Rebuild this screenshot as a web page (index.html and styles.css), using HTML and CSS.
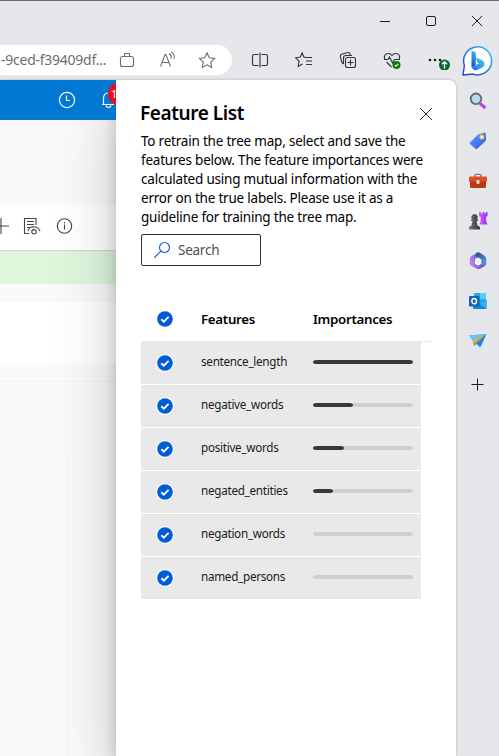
FILE: index.html
```html
<!DOCTYPE html>
<html lang="en">
<head>
<meta charset="utf-8">
<title>Feature List</title>
<link rel="stylesheet" href="styles.css">
</head>
<body>
<svg width="0" height="0" class="defs" aria-hidden="true">
  <defs>
    <linearGradient id="bingRing" x1="0" y1="1" x2="1" y2="0"><stop offset="0" stop-color="#2145c8"/><stop offset=".5" stop-color="#2b7be6"/><stop offset="1" stop-color="#35c4f2"/></linearGradient>
    <linearGradient id="bingB" x1="0" y1="0" x2="0" y2="1"><stop offset="0" stop-color="#37b8f5"/><stop offset="1" stop-color="#1b48d4"/></linearGradient>
    <linearGradient id="bingC" x1="0" y1="1" x2="1" y2="0"><stop offset="0" stop-color="#1c62e6"/><stop offset="1" stop-color="#3fdcf0"/></linearGradient>
    <linearGradient id="tag" x1="0" y1="0" x2="1" y2="1"><stop offset="0" stop-color="#5ea4ff"/><stop offset="1" stop-color="#2d55e0"/></linearGradient>
    <linearGradient id="pawn" x1="0" y1="0" x2="1" y2="0"><stop offset="0" stop-color="#777"/><stop offset="1" stop-color="#333"/></linearGradient>
    <linearGradient id="rook" x1="0" y1="0" x2="1" y2="0"><stop offset="0" stop-color="#cf63ff"/><stop offset="1" stop-color="#9a2af0"/></linearGradient>
    <linearGradient id="officeL" x1="1" y1="0" x2="0" y2="1"><stop offset="0" stop-color="#6f5bc8"/><stop offset="1" stop-color="#c08cf0"/></linearGradient>
    <linearGradient id="officeR" x1="0" y1="0" x2="1" y2="1"><stop offset="0" stop-color="#24457f"/><stop offset="1" stop-color="#5aa5f2"/></linearGradient>
    <linearGradient id="officeB" x1="0" y1="0" x2="1" y2="0"><stop offset="0" stop-color="#b57ae8"/><stop offset="1" stop-color="#6a3fb0"/></linearGradient>
    <symbol id="check" viewBox="0 0 18 18"><circle cx="9" cy="9" r="9" fill="#fff"/><circle cx="9" cy="9" r="7.8" fill="#015cda"/><path d="M5.3 9.2l2.5 2.4 4.8-4.8" fill="none" stroke="#fff" stroke-width="1.9"/></symbol>
  </defs>
</svg>
<div class="browser">
  <div class="titlebar">
    <svg class="win" viewBox="0 0 12 12"><path d="M1 6.5h10"/></svg>
    <svg class="win" viewBox="0 0 12 12"><rect x="1.5" y="1.5" width="9" height="9" rx="1.5"/></svg>
    <svg class="win" viewBox="0 0 12 12"><path d="M1 1l10 10M11 1L1 11"/></svg>
  </div>
  <div class="toolbar">
    <div class="address">
      <span class="url">-9ced-f39409df...</span>
      <svg class="ico gray" viewBox="0 0 20 20"><rect x="3.5" y="6.5" width="13" height="10" rx="2"/><path d="M7.5 6.5v-3h5v3"/></svg>
      <svg class="ico gray" viewBox="0 0 20 20"><path d="M3.5 16.5l4.600-12h.8l4.600 12M5.200 12.500h6.600M12 3.500q2.600 1.800 2.300 5M14.200 1.800q3.600 2.400 3.100 7"/></svg>
      <svg class="ico gray" viewBox="0 0 20 20"><path d="M10 2.800l2.300 4.900 5.300.7-3.900 3.700 1 5.300L10 14.800l-4.700 2.600 1-5.300-3.900-3.700 5.300-.7z"/></svg>
    </div>
    <div class="actions">
      <svg class="ico" viewBox="0 0 20 20"><path d="M8.500 4.500H4a1.500 1.500 0 0 0-1.500 1.500v8A1.500 1.500 0 0 0 4 15.500h4.500M11.500 4.500H16a1.500 1.500 0 0 1 1.500 1.500v8a1.500 1.500 0 0 1-1.500 1.500h-4.500M10 2.500v15"/></svg>
      <svg class="ico" viewBox="0 0 20 20"><path d="M11 7.500h7M12 11h6M12 14.500h6M11.500 7.500L9.900 7 8.100 2.800 6.300 7l-4.600.8 3.400 3.500-.9 5.200 4.300-2.500"/></svg>
      <svg class="ico" viewBox="0 0 20 20"><rect x="7.500" y="7.500" width="10" height="10" rx="2"/><path d="M12.500 9.500v6M9.500 12.500h6M5.500 14l-1.600-1.500L2.300 6.500Q2 4.800 3.500 4.200L10 2.500q1.500-.2 2 1.500l.3 1.500M5.500 14V8q0-2.500 2.500-2.500h6"/></svg>
      <svg class="ico" viewBox="0 0 20 20"><path d="M2.800 9.500C1.200 5.500 4 3.300 6.500 3.500c1.700.1 2.700 1 3.500 2 .8-1 1.800-1.900 3.500-2 2.500-.2 5.300 2 3.700 6M4.500 12l5 5M2 9.500h4l1.500-2.500 3 6 2-3.500h5.500"/><circle cx="14.500" cy="15" r="4" fill="#107c10" stroke="none"/><path d="M12.800 15.200l1.200 1.100 2.300-2.400" stroke="#fff"/></svg>
      <svg class="more" viewBox="0 0 24 20"><g fill="#1b1b1b"><circle cx="4" cy="10" r="1.300"/><circle cx="9" cy="10" r="1.300"/><circle cx="14" cy="10" r="1.300"/></g><circle cx="18.500" cy="15" r="5.500" fill="#0b6a2b"/><path d="M18.500 18.500v-6.500M16 14.200l2.500-2.500 2.500 2.500" fill="none" stroke="#fff" stroke-width="1.400"/></svg>
    </div>
    <svg class="bing" viewBox="0 0 32 32"><path d="M2 30l1.400-9.500A14 14 0 1 1 12 29.100z" fill="#fff" stroke="url(#bingRing)" stroke-width="1.500" stroke-linejoin="round"/><path d="M10.500 5.500l4.300 2V20l-4.300 2.500z" fill="url(#bingB)"/><path d="M10.500 20.500q2 1.200 4.300-.2l3.200-1.900-1.700-.9-1.500-5 6 2.500q2.800 1.200 2.700 4.200-.1 2-1.800 3L16 25q-1.500.7-3 0-2.300-1.200-2.500-4.500z" fill="url(#bingC)"/></svg>
  </div>
  <div class="main">
    <div class="page">
      <div class="under">
        <div class="azure">
          <svg class="clock" viewBox="0 0 18 18"><circle cx="9" cy="9" r="7.600"/><path d="M8.500 4.500v5H12"/></svg>
          <svg class="bell" viewBox="0 0 18 18"><path d="M2 13.500h13M3.500 13.500V7.500q0-5.500 5-5.500t5 5.500v6M6 14.500q.5 2 2.500 2t2.500-2"/></svg>
          <span class="badge">1</span>
        </div>
        <div class="blank"></div>
        <div class="commands">
          <svg class="cmd plus" viewBox="0 0 18 18"><path d="M9 1v16M1 9h16"/></svg>
          <svg class="cmd" viewBox="0 0 18 18"><path d="M6 16.500H1.500V1.500h11.500v6.500M4 4.500h7M4 7.500h7M4 10.500h2.500M5 14q1-4 5.500-4.200 5 .2 6.500 4.200"/><circle cx="11" cy="14.800" r="2.200"/></svg>
          <svg class="cmd" viewBox="0 0 18 18"><circle cx="9.500" cy="9" r="7.200"/><path d="M9.500 7.500v5M9.500 5v1.400"/></svg>
        </div>
        <div class="notice"></div>
        <div class="gap"></div>
        <div class="card"></div>
        <div class="strip"></div>
        <div class="rest"><div class="rail"></div></div>
      </div>
      <section class="panel">
        <header class="head">
          <h1>Feature List</h1>
          <svg class="close" viewBox="0 0 14 14"><path d="M1 1l12 12M13 1L1 13"/></svg>
        </header>
        <p class="intro">To retrain the tree map, select and save the<br>features below. The feature importances were<br>calculated using mutual information with the<br>error on the true labels. Please use it as a<br>guideline for training the tree map.</p>
        <div class="search">
          <svg viewBox="0 0 18 18"><circle cx="11.500" cy="6.500" r="5"/><path d="M7.900 10.100L1.200 16.800"/></svg>
          <span>Search</span>
        </div>
        <div class="row thead"><svg><use href="#check"/></svg><span>Features</span><span>Importances</span></div>
        <div class="rows">
          <div class="row"><svg><use href="#check"/></svg><span>sentence_length</span><i class="bar"><b style="width:100%"></b></i></div>
          <div class="row"><svg><use href="#check"/></svg><span>negative_words</span><i class="bar"><b style="width:39.5%"></b></i></div>
          <div class="row"><svg><use href="#check"/></svg><span>positive_words</span><i class="bar"><b style="width:31%"></b></i></div>
          <div class="row"><svg><use href="#check"/></svg><span>negated_entities</span><i class="bar"><b style="width:20%"></b></i></div>
          <div class="row"><svg><use href="#check"/></svg><span>negation_words</span><i class="bar"></i></div>
          <div class="row"><svg><use href="#check"/></svg><span>named_persons</span><i class="bar"></i></div>
        </div>
      </section>
    </div>
    <nav class="side">
      <svg viewBox="0 0 20 20"><path d="M12 12.500l5.500 4.500" stroke="#c23df0" stroke-width="3"/><circle cx="8" cy="7.800" r="5.300" fill="#b5dcf5" stroke="#666" stroke-width="1.800"/></svg>
      <svg viewBox="0 0 20 20"><path d="M2 11.500L10 3.500l6-1.800q1.800-.4 1.900 1.300l.1 6.500-8.500 8q-1.200 1-2.300 0L2 13q-.8-.8 0-1.500z" fill="url(#tag)"/><circle cx="13.800" cy="6" r="1.900" fill="#fff" stroke="#f7c325" stroke-width="1.200"/></svg>
      <svg viewBox="0 0 20 20"><path d="M7 6V4.200q0-.9 1-.9h4q1 0 1 .9V6" fill="none" stroke="#777" stroke-width="1.300"/><rect x="1" y="5.500" width="18" height="5.500" rx="1.200" fill="#db5020"/><path d="M2 10.500h16v5q0 1.500-1.500 1.500h-13Q2 17 2 15.500z" fill="#b83a10"/><rect x="8.500" y="9" width="3" height="4" rx="1" fill="#d8d8d8"/></svg>
      <svg viewBox="0 0 20 20"><path d="M11 1h2v1.500h1.500V1h2v1.500H18V1h1.500v4l-1.500 1 .5 5 1 2.500h-8l1-2.500.2-5L11 5z" fill="url(#rook)"/><path d="M1 18.500v-2.500l2.500-1.500 1-4.500H3V8.500h1.300a3.100 3.100 0 1 1 4.400 0H10V10H8.500l1 4.500 2.500 1.500v2.500z" fill="url(#pawn)"/></svg>
      <svg viewBox="0 0 20 20"><path d="M10.500 1.500L3.500 5Q1.800 6 1.800 8v4.500q0 1.600 1.300 2.200 2.400 1 3.900-1.200V8.500l4.500-2.800z" fill="url(#officeL)"/><path d="M8.500 1.800q1.700-1 3.300 0L16.800 5q1.500.9 1.500 2.800v4.700q-.4 2.200-2.300 2.200-1.800-.2-2.800-1.700V8.500L8 5.500Q7 3.300 8.500 1.800z" fill="url(#officeR)"/><path d="M18.300 12q0 2-1.500 3l-4.300 2.500q-2 1.100-4 0L3.300 14.800q2.700.4 3.700-1.800l3.500 1.700 3-2 2 1.500q2.300.2 2.800-2.200z" fill="url(#officeB)"/><path d="M7 8.300l3-1.800 3.400 2v3.800l-3.200 1.900L7 12.500z" fill="#eef0f6"/></svg>
      <svg viewBox="0 0 20 20"><rect x="6" y="2" width="12" height="12" rx="1" fill="#28a8ea"/><path d="M12 2h6v6h-6z" fill="#50d0f5"/><path d="M5 9l6.500 3.500L18.500 9v8q0 1-1 1H6q-1 0-1-1z" fill="#1786d0"/><path d="M11.500 12.500L18.500 9v9z" fill="#31b5ee"/><rect x="1" y="5" width="10.500" height="10.500" rx="1" fill="#0c64b5"/><ellipse cx="6.200" cy="10.200" rx="2.300" ry="2.600" fill="none" stroke="#fff" stroke-width="1.500"/></svg>
      <svg viewBox="0 0 20 20"><path d="M1 4.500L18.500 3 12 16.500 8.500 13 6 15 5 10z" fill="#38a5ef"/><path d="M18.500 3L5 10l1 5 2-3.500z" fill="#e99a22"/><path d="M18.500 3L8.500 12.500 12.500 16z" fill="#2585dd"/><path d="M1 4.500L18.500 3 5 9z" fill="#63c5fa"/><path d="M18.500 3L4.500 9.500l1 1.800z" fill="#f5b43d"/></svg>
      <svg class="add" viewBox="0 0 20 20"><path d="M10.500 4.500v12M4.500 10.500h12" stroke="#1b1b1b"/></svg>
    </nav>
  </div>
</div>
</body>
</html>
```
FILE: styles.css
```css
* { box-sizing: border-box; }
body { margin: 0; font-family: "Noto Sans", "Open Sans", sans-serif; color: #000; overflow: hidden; }
.defs { display: block; height: 0; }
.browser { width: 499px; height: 756px; background: #e6e7eb; border-top: 1px solid #6c6c6f; display: flex; flex-direction: column; overflow: hidden; }
svg { flex: none; }

.titlebar { height: 40px; display: flex; justify-content: flex-end; gap: 34px; padding: 14px 16px 0 0; }
.win { width: 12px; height: 12px; fill: none; stroke: #1b1b1b; stroke-width: 1; }
.toolbar { height: 39px; display: flex; align-items: flex-start; padding-top: 4px; }
.address { width: 232px; height: 30px; background: #fff; border-radius: 0 15px 15px 0; display: flex; align-items: center; color: #6e6e6e; }
.url { width: 117px; padding-left: 1px; font-size: 14px; line-height: 20px; white-space: nowrap; letter-spacing: -.25px; }
.ico { width: 20px; height: 20px; fill: none; stroke: #333; stroke-width: 1.1; }
.address .ico + .ico { margin-left: 20px; }
.address .gray { stroke: #6e6e6e; }
.actions { display: flex; gap: 24px; padding: 5px 0 0 18px; }
.more { width: 24px; height: 20px; }
.bing { width: 32px; height: 32px; margin-left: 11px; }

.main { flex: 1; display: flex; min-height: 0; }
.page { width: 456px; display: grid; grid-template-columns: 116px 340px; border-top-right-radius: 8px; overflow: hidden; box-shadow: 0 0 3px rgba(0,0,0,.25); background: #fff; }
.under { display: flex; flex-direction: column; min-width: 0; }
.azure { height: 40px; background: #0078d4; z-index: 2; position: relative; display: flex; align-items: center; padding-left: 58px; overflow: hidden; }
.clock, .bell { width: 18px; height: 18px; fill: none; stroke: #fff; stroke-width: 1.2; }
.bell { margin-left: 24px; }
.badge { position: absolute; left: 108px; top: 2px; width: 24px; height: 24px; border-radius: 12px; background: #e3101f; color: #fff; font-size: 11px; line-height: 24px; padding-left: 3px; }
.blank { height: 85px; background: #fafafa; }
.commands { height: 46px; background: #fff; border-bottom: 1px solid #d6d6d6; display: flex; align-items: center; gap: 14px; padding-bottom: 3px; }
.cmd { width: 18px; height: 18px; fill: none; stroke: #444; stroke-width: 1.1; }
.plus { margin-left: -8px; }
.plus + .cmd { margin-left: -1px; }
.notice { height: 33px; background: #dff6dd; }
.gap { height: 18px; background: #fafafa; }
.card { height: 62px; background: #fff; }
.strip { height: 18px; background: #fafafa; border-bottom: 1px solid #f3f3f3; }
.rest { flex: 1; display: flex; background: #fafafa; padding-top: 78px; }
.rail { width: 69px; border-right: 1px solid #f2f2f2; }

.panel { position: relative; z-index: 1; background: #fff; padding: 0 24px 0 25px; box-shadow: 0 26px 58px rgba(0,0,0,.22), 0 5px 14px rgba(0,0,0,.18); }
.head { display: flex; justify-content: space-between; padding: 20px 0 0; height: 52px; }
h1 { margin: 0 0 0 -1px; font-size: 19px; line-height: 27px; font-weight: 600; letter-spacing: -.42px; white-space: nowrap; }
.close { width: 14px; height: 14px; margin: 7px -1px 0 0; fill: none; stroke: #333; stroke-width: 1; }
.intro { margin: 0; font-size: 13.5px; line-height: 19px; white-space: nowrap; letter-spacing: -.21px; }
.search { width: 120px; height: 32px; margin-top: 7px; border: 1px solid #323130; border-radius: 2px; display: flex; align-items: center; padding-left: 11px; gap: 7px; font-size: 13.5px; letter-spacing: -.25px; color: #505050; }
.search svg { width: 18px; height: 18px; fill: none; stroke: #2563d8; stroke-width: 1.2; }
.row { width: 280px; height: 42px; display: grid; grid-template-columns: 60px 112px 100px; align-items: center; font-size: 11.7px; }
.row svg { width: 18px; height: 18px; margin-left: 15px; }
.thead { width: 291px; height: 44px; margin-top: 32px; padding-bottom: 2px; border-bottom: 1px solid #eaeaea; font-size: 13.3px; font-weight: 600; letter-spacing: -.3px; }
.rows { display: grid; gap: 1px; }
.rows .row { background: #e9e9e9; color: #1b1b1b; letter-spacing: -.28px; }
.rows .row span { margin-top: -5px; }
.bar { width: 100px; height: 4px; background: #cfcfcf; border-radius: 4px / 2px; display: block; margin-top: -3px; }
.bar b { display: block; height: 4px; background: #373737; border-radius: 4px / 2px; }
.side { width: 43px; display: flex; flex-direction: column; align-items: center; gap: 20px; padding-top: 11px; }
.side svg { width: 20px; height: 20px; fill: none; }
.side .add { margin: 3px 2px 0 0; }
```
